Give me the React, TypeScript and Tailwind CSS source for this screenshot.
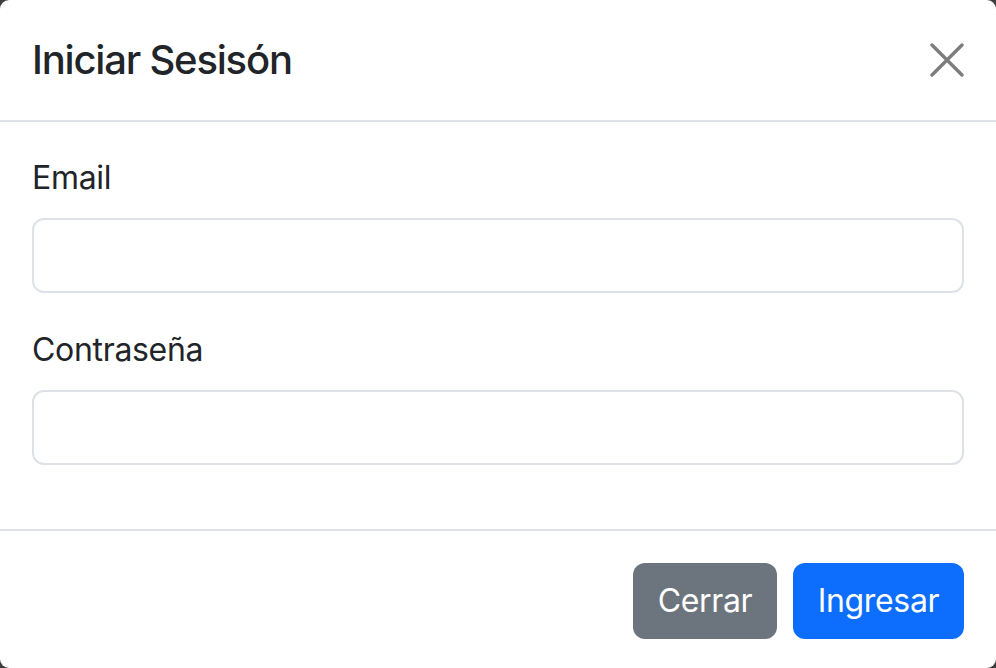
export default function App() {
  return (
    <div className="h-[668px] w-[996px] bg-[#3d3d3d] font-['Inter',sans-serif] text-[#212529]">
      <div className="flex h-full w-full flex-col overflow-hidden rounded-[9px] bg-white">
        <div className="flex h-[122px] shrink-0 items-center justify-between border-b-2 border-[#dee2e6] px-8">
          <h5 className="text-[40px] font-medium leading-[1.2] tracking-[-0.03em]">Iniciar Sesisón</h5>
          <button className="flex items-center justify-center text-[#7d7d7d]" aria-label="Close">
            <svg width="34" height="34" viewBox="0 0 34 34" fill="none" stroke="currentColor" strokeWidth="3.4" strokeLinecap="round">
              <path d="M2 2 L32 32 M32 2 L2 32" />
            </svg>
          </button>
        </div>

        <div className="border-b-2 border-[#dee2e6] px-8 pb-[31px] pt-8 tracking-[-0.02em]">
          <div className="mb-[33px]">
            <label className="mb-4 block text-[32px] leading-[1.5]">Email</label>
            <input
              type="email"
              className="block h-[75px] w-full rounded-[12px] border-2 border-[#dee2e6] bg-white px-6 text-[32px] outline-none"
            />
          </div>
          <div className="mb-[33px]">
            <label className="mb-4 block text-[32px] leading-[1.5]">Contraseña</label>
            <input
              type="password"
              className="block h-[75px] w-full rounded-[12px] border-2 border-[#dee2e6] bg-white px-6 text-[32px] outline-none"
            />
          </div>
        </div>

        <div className="flex flex-1 items-start justify-end gap-4 px-8 pt-[32px] tracking-[-0.02em]">
          <button className="h-[76px] w-[144px] rounded-[12px] bg-[#6c757d] text-[32px] text-white">Cerrar</button>
          <button className="h-[76px] w-[171px] rounded-[12px] bg-[#0d6efd] text-[32px] text-white">Ingresar</button>
        </div>
      </div>
    </div>
  );
}
